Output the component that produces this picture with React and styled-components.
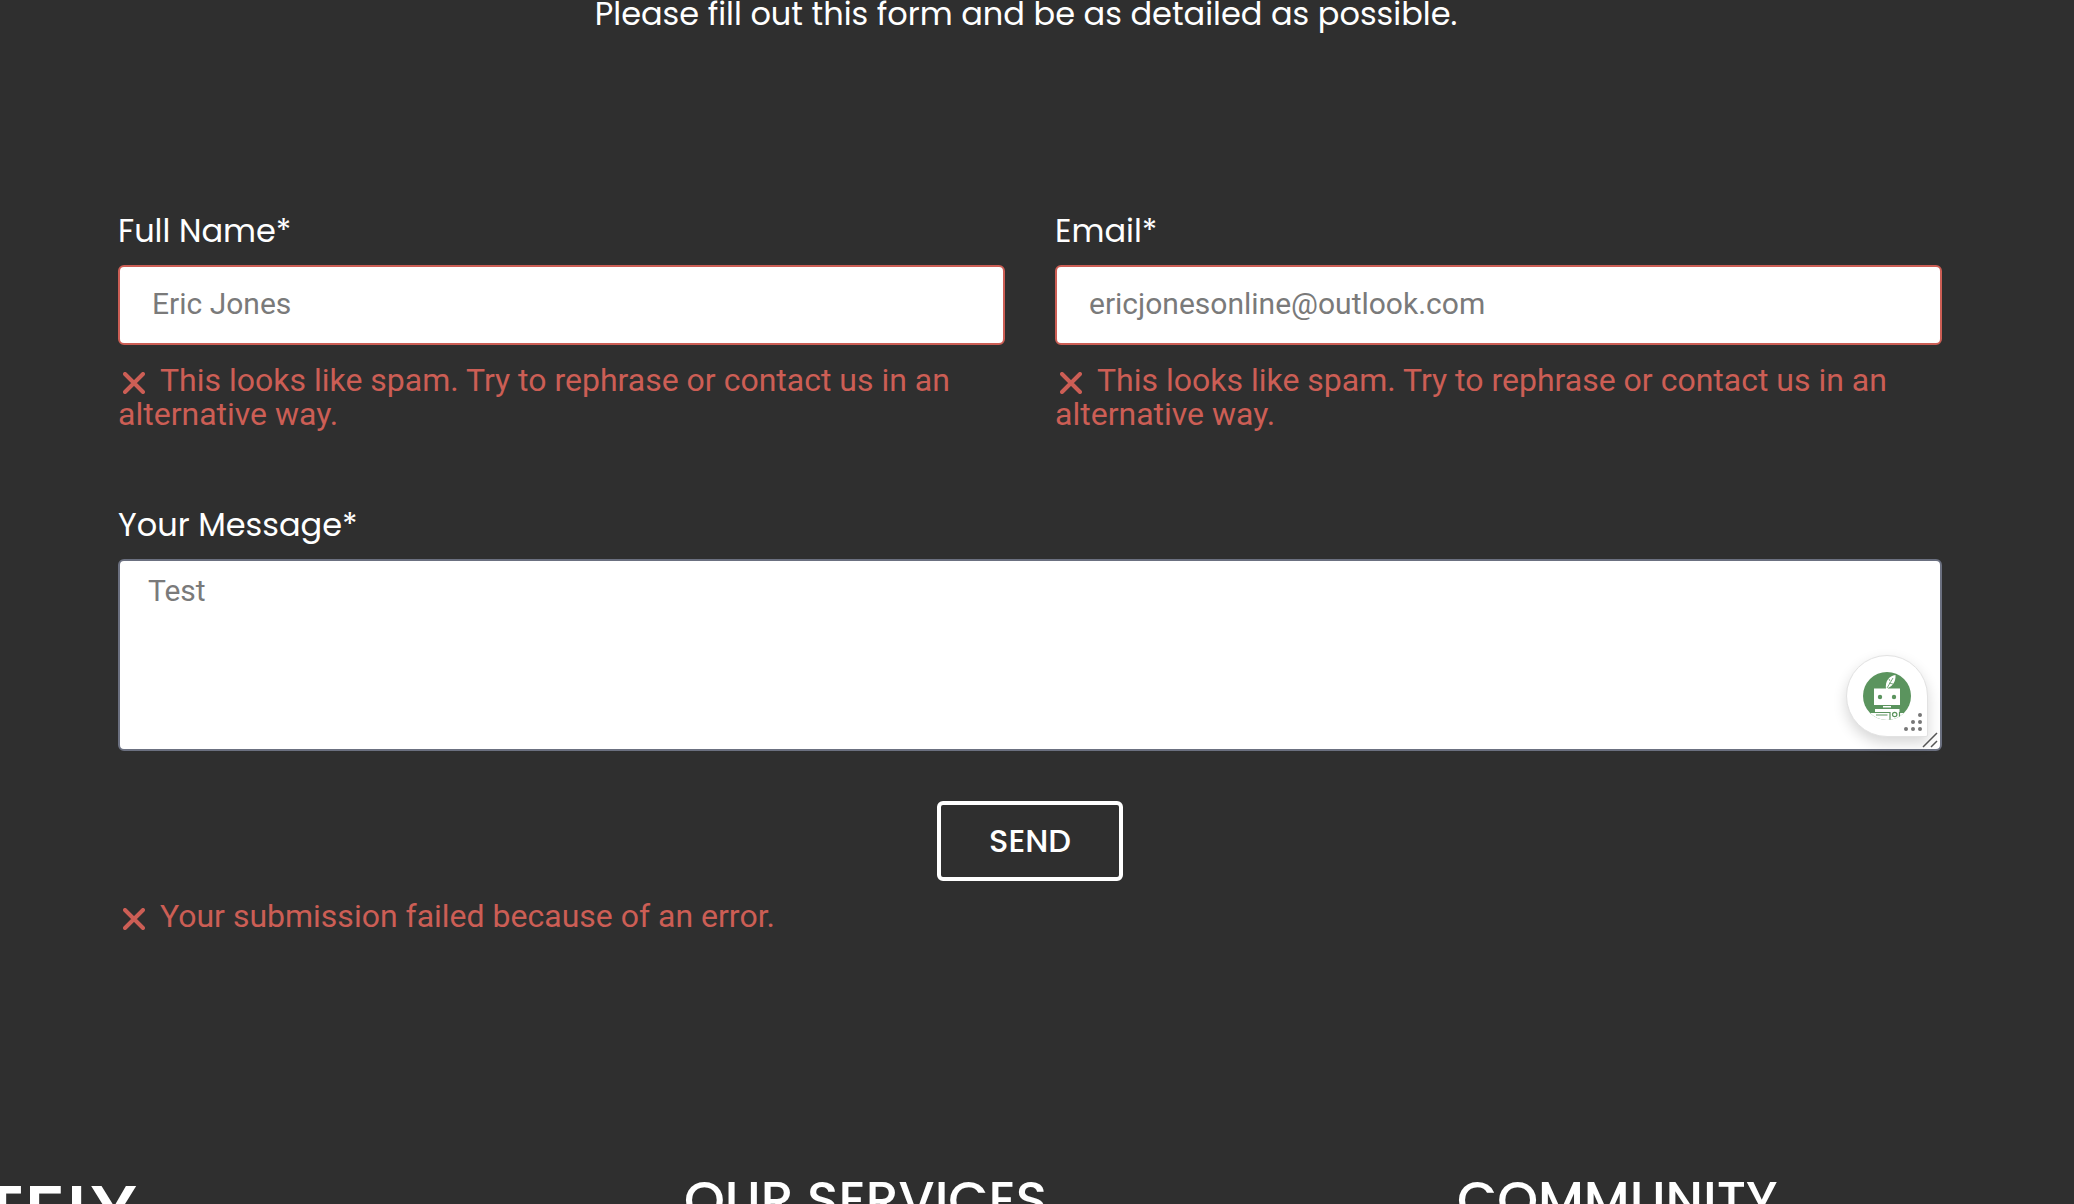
import React from 'react';
import styled, { createGlobalStyle } from 'styled-components';

const display = `Poppins, Inter, "Open Sans", sans-serif`;
const body = `Roboto, "Liberation Sans", sans-serif`;
const red = '#cc5e55';

const GlobalStyle = createGlobalStyle`
  *, *::before, *::after { box-sizing: border-box; }
  body { margin: 0; background: #2f2f2f; }
`;

const Page = styled.div`
  height: 100vh;
  overflow: hidden;
  color: #fff;
  background: #2f2f2f;
  font-family: ${display};
`;

const Intro = styled.p`
  margin: 0 24px 0 0;
  height: 206px;
  padding-left: 2px;
  text-align: center;
  font-size: 32px;
  line-height: 28px;
`;

const Form = styled.form`
  display: flex;
  flex-direction: column;
  padding: 0 132px 0 118px;
`;

const FieldRow = styled.div`
  display: grid;
  grid-template-columns: 1fr 1fr;
  gap: 50px;
  margin-bottom: 69px;
`;

const Field = styled.div`
  display: flex;
  flex-direction: column;
`;

const Label = styled.label`
  font-size: 32px;
  line-height: 50px;
  margin-bottom: 9px;
`;

const Input = styled.input`
  width: 100%;
  height: 80px;
  padding: 0 32px 4px;
  border: 2px solid ${red};
  border-radius: 6px;
  background: #fff;
  color: #333;
  font: 30px ${body};
  outline: none;
  &::placeholder { color: #7a7a7a; opacity: 1; }
`;

const ErrorText = styled.p`
  margin: 18px 0 0;
  color: ${red};
  font: 32px/34px ${body};
`;

const CrossSvg = styled.svg`
  width: 22px;
  height: 22px;
  margin: 0 15px 0 5px;
  vertical-align: -3px;
`;

const MessageBox = styled.div`
  position: relative;
  display: flex;
`;

const Textarea = styled.textarea`
  width: 100%;
  height: 192px;
  padding: 12px 28px;
  border: 2px solid #6b7080;
  border-radius: 6px;
  background: #fff;
  color: #333;
  font: 30px/36px ${body};
  resize: none;
  outline: none;
  &::placeholder { color: #7a7a7a; opacity: 1; }
`;

const Assistant = styled.button`
  position: absolute;
  right: 14px;
  bottom: 14px;
  width: 82px;
  height: 82px;
  padding: 0;
  border: 1px solid #e2e2e2;
  border-radius: 41px 41px 2px 41px;
  background: #fff;
  box-shadow: 0 6px 14px rgba(0, 0, 0, 0.16);
  svg { display: block; }
`;

const Grip = styled.svg`
  position: absolute;
  right: 2px;
  bottom: 2px;
`;

const Send = styled.button`
  align-self: center;
  width: 186px;
  height: 80px;
  margin-top: 50px;
  padding: 0;
  border: 4px solid #fff;
  border-radius: 6px;
  background: transparent;
  color: #fff;
  font: 500 32px ${display};
`;

const Footer = styled.footer`
  display: grid;
  grid-template-columns: 684px 773px 1fr;
  align-items: start;
  padding-top: 237px;
`;

const Brand = styled.div`
  margin-left: -21px;
  font-size: 80px;
  font-weight: 500;
  line-height: 88px;
`;

const FooterTitle = styled.h2`
  margin: 0;
  font-size: 52px;
  font-weight: 500;
  line-height: 60px;
`;

const Cross = () => (
  <CrossSvg viewBox="0 0 22 22" fill="none" stroke="currentColor" strokeWidth="4" strokeLinecap="round" aria-hidden="true">
    <path d="M2 2 20 20M20 2 2 20" />
  </CrossSvg>
);

const Robot = () => (
  <svg width="80" height="80" viewBox="0 0 80 80" aria-hidden="true">
    <defs>
      <clipPath id="disc"><circle cx="40" cy="40" r="24" /></clipPath>
    </defs>
    <circle cx="40" cy="40" r="24" fill="#5b945e" />
    <g clipPath="url(#disc)">
      <path d="M39 33C38 25 42 20 48.500 19C49 25 46 30 41 32L40.500 34Z" fill="#fff" />
      <path d="M40 32 46 22M42 27l4 1M43 25l-1-2" stroke="#5b945e" strokeWidth="0.8" />
      <rect x="27" y="32.500" width="26" height="16.500" fill="#fff" />
      <circle cx="33" cy="41" r="2.200" fill="#5b945e" />
      <circle cx="47" cy="41" r="2.200" fill="#5b945e" />
      <rect x="36" y="50" width="8" height="1.500" fill="#fff" />
      <path d="M28 53H52.500V57H57V66H24V57H28Z" fill="#fff" />
      <path d="M27 56.500H43V64M29 59H40.500M52.500 56V62" fill="none" stroke="#5b945e" strokeWidth="1.200" />
      <circle cx="47.700" cy="58.500" r="2.200" fill="#fff" stroke="#5b945e" strokeWidth="1.200" />
    </g>
    <g fill="#777">
      <circle cx="73" cy="59" r="2" />
      <circle cx="66" cy="66" r="2" />
      <circle cx="73" cy="66" r="2" />
      <circle cx="59" cy="73" r="2" />
      <circle cx="66" cy="73" r="2" />
      <circle cx="73" cy="73" r="2" />
    </g>
  </svg>
);

const spam = 'This looks like spam. Try to rephrase or contact us in an alternative way.';

const TextField = ({ id, label, type, placeholder }) => (
  <Field>
    <Label htmlFor={id}>{label}</Label>
    <Input id={id} type={type} placeholder={placeholder} aria-describedby={`${id}-error`} />
    <ErrorText id={`${id}-error`}><Cross />{spam}</ErrorText>
  </Field>
);

export default function App() {
  return (
    <Page>
      <GlobalStyle />
      <Intro>Please fill out this form and be as detailed as possible.</Intro>
      <Form noValidate onSubmit={(e) => e.preventDefault()}>
        <FieldRow>
          <TextField id="name" label="Full Name*" type="text" placeholder="Eric Jones" />
          <TextField id="email" label="Email*" type="email" placeholder="ericjonesonline@outlook.com" />
        </FieldRow>
        <Field>
          <Label htmlFor="message">Your Message*</Label>
          <MessageBox>
            <Textarea id="message" placeholder="Test" />
            <Assistant type="button" aria-label="Writing assistant"><Robot /></Assistant>
            <Grip width="18" height="18" viewBox="0 0 18 18" stroke="#555" strokeWidth="1.500" aria-hidden="true">
              <path d="M1 16 15 2M9 16 15 10" />
            </Grip>
          </MessageBox>
        </Field>
        <Send type="submit">SEND</Send>
        <ErrorText role="alert"><Cross />Your submission failed because of an error.</ErrorText>
      </Form>
      <Footer>
        <Brand>TEIX</Brand>
        <FooterTitle>OUR SERVICES</FooterTitle>
        <FooterTitle>COMMUNITY</FooterTitle>
      </Footer>
    </Page>
  );
}
